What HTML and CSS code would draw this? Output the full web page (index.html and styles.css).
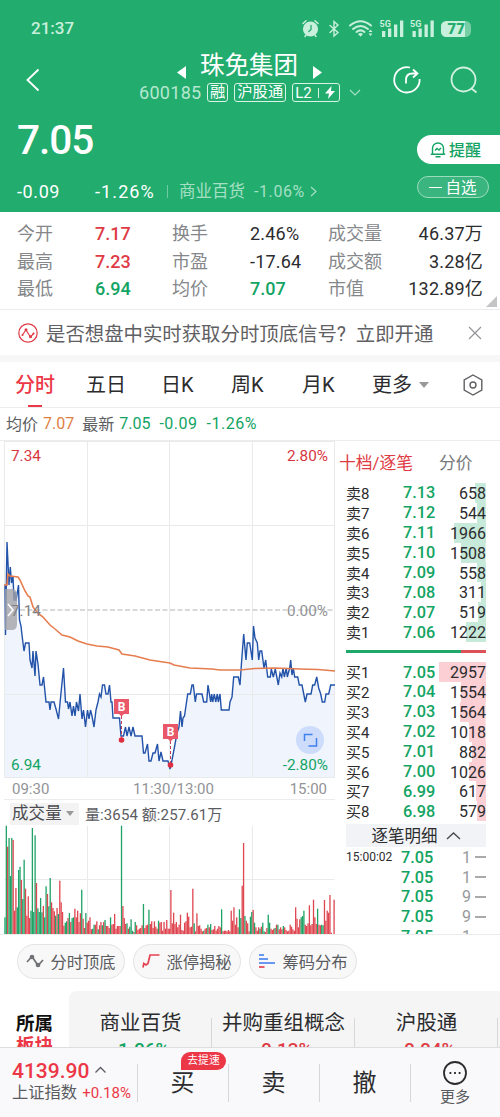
FILE: index.html
```
<!DOCTYPE html>
<html lang="zh-CN">
<head>
  <meta charset="UTF-8" />
  <meta name="viewport" content="width=device-width, initial-scale=1.0" />
  <title>珠免集团 600185</title>
  <link rel="stylesheet" href="styles.css">
</head>
<body>
<div class="app">

  <header class="top">
    <div class="status">
      <span class="clock">21:37</span>
      <svg class="status-icons" viewBox="300 16 174 24" width="174" height="24">
        <g fill="none" stroke="#c9f0dc" stroke-width="1.5" stroke-linecap="round">
          <circle cx="310.500" cy="29" r="6.800" fill="#c9f0dc"/>
          <path d="M303 23.500l3-2.800M318 23.500l-3-2.800M306 35l-1 1.500M315 35l1 1.500"/>
          <path d="M311 25.500v4l-2.200 2" stroke="#22ac6e" stroke-width="1.300"/>
          <path d="M330 25.500l8 7-4 3.500V21.500l4 3.500-8 7.500" stroke-width="1.400"/>
          <path d="M350 25.500q10.500-8.500 21 0M353 29q7.500-6 15 0M356.500 32q4-3.200 8 0" stroke-width="2"/>
        </g>
        <g fill="#c9f0dc">
          <path d="M358 34q2.500-2 5 0l-2.500 2.800zM368.500 32l2-2.500 2 2.500zM368.500 33.500h4l-2 2.500z"/>
          <path d="M382 31h3.300v6H382zM388 28.500h3.300V37H388zM394 24.500h3.300V37H394zM400 20.500h3.300V37H400z"/>
          <path d="M412.500 31h3.300v6h-3.300zM418.500 28.500h3.300V37h-3.300zM424.500 24.500h3.300V37h-3.300zM430.500 20.500h3.300V37h-3.300z"/>
          <rect x="441" y="21" width="30" height="16" rx="5.500" opacity=".5"/>
          <path d="M446.500 21H465v16h-18.500a5.500 5.500 0 0 1-5.500-5.500v-5a5.500 5.500 0 0 1 5.500-5.500z"/>
          <text class="net" x="379.500" y="27">5G</text>
          <text class="net" x="410" y="27">5G</text>
        </g>
        <text class="battery" x="447.500" y="34.300">77</text>
      </svg>
    </div>

    <div class="title-bar">
      <svg class="back" width="14" height="24" viewBox="0 0 14 24"><path d="M12.500 1.500L1.500 12l11 10.500"/></svg>
      <div class="title">
        <div class="name-row">
          <svg width="9" height="13" viewBox="0 0 9 13"><path d="M9 0v13L0 6.500z"/></svg>
          <h1>珠免集团</h1>
          <svg width="9" height="13" viewBox="0 0 9 13"><path d="M0 0v13l9-6.500z"/></svg>
        </div>
        <div class="code-row">
          <span class="code">600185</span>
          <span class="tag">融</span>
          <span class="tag">沪股通</span>
          <span class="tag l2">L2<i></i><svg width="10" height="13" viewBox="0 0 10 13"><path d="M6.500 0L0 7.500h4L3 13l7-8H6z"/></svg></span>
          <svg class="down" width="12" height="7" viewBox="0 0 12 7"><path d="M1 1l5 5 5-5"/></svg>
        </div>
      </div>
      <div class="tools">
        <svg width="28" height="28" viewBox="0 0 28 28"><path d="M17 1.500A12.700 12.700 0 1 0 26.600 13M13 17.500v-3.500q0-6.500 6.500-6.500h4.500M20 3.500l4.500 4-4.500 4"/></svg>
        <svg width="28" height="28" viewBox="0 0 28 28" class="search"><circle cx="13.500" cy="13.500" r="12"/><path d="M21.500 22.500l5 4"/></svg>
      </div>
    </div>

    <div class="price-block">
      <div class="price">7.05</div>
      <div class="change">
        <span class="diff">-0.09</span>
        <span class="pct">-1.26%</span>
        <span class="sector">商业百货</span>
        <span class="sector-pct">-1.06%</span>
        <svg width="7" height="11" viewBox="0 0 7 11"><path d="M1 1l5 4.500L1 10"/></svg>
      </div>
      <div class="remind">
        <svg width="16" height="17" viewBox="0 0 16 17"><path d="M2.500 13V7.500a5.500 5.500 0 0 1 11 0V13M.8 13.300h14.400M5.500 15.800h5M5 9.500l2-2 2 1.500 2-2"/></svg><span>提醒</span>
      </div>
      <div class="unpick"><i></i><span>自选</span></div>
    </div>
  </header>

  <section class="stats">
    <span>今开</span><b class="red">7.17</b><span>换手</span><b>2.46%</b><span>成交量</span><b class="r">46.37万</b>
    <span>最高</span><b class="red">7.23</b><span>市盈</span><b>-17.64</b><span>成交额</span><b class="r">3.28亿</b>
    <span>最低</span><b class="green">6.94</b><span>均价</span><b class="green">7.07</b><span>市值</span><b class="r">132.89亿</b>
  </section>

  <section class="notice">
    <svg width="20" height="20" viewBox="0 0 20 20"><circle cx="10" cy="10" r="9.200"/><path d="M4 12.500L8 7l4.500 7 3.500-4"/><g class="dots"><circle cx="8" cy="6.800" r="1.500"/><circle cx="12.500" cy="13.800" r="1.500"/><circle cx="4.500" cy="12" r="1"/><circle cx="15.500" cy="10.500" r="1"/></g></svg>
    <p>是否想盘中实时获取分时顶底信号? <span>立即开通</span></p>
    <svg class="close" width="14" height="14" viewBox="0 0 14 14"><path d="M1 1l12 12M13 1L1 13"/></svg>
  </section>

  <nav class="tabs">
    <span class="active">分时</span>
    <span>五日</span>
    <span>日K</span>
    <span>周K</span>
    <span>月K</span>
    <span class="more">更多</span>
    <svg width="22" height="22" viewBox="0 0 22 22"><path d="M11 1l8.800 5v10L11 21l-8.800-5V6z"/><circle cx="11" cy="11" r="3"/></svg>
  </nav>

  <div class="summary">
    <span>均价</span><b class="orange">7.07</b>
    <span class="latest">最新</span><b class="green">7.05</b><b class="green">-0.09</b><b class="green">-1.26%</b>
  </div>

  <main class="market">
    <div class="charts">
      <svg class="trend" viewBox="0 441 338 338" width="338" height="338">
        <path id="area" fill="#eff4fd"/>
        <path class="grid" d="M4.500 441.500h330M4.500 525.500h330M4.500 694.500h330M4.500 777.500h330M4.500 441v337M87.500 441v337M169.500 441v337M252.500 441v337M334.500 441v337"/>
        <path class="zero" d="M20 610h315"/>
        <polyline id="line" class="line"/>
        <polyline class="avg" points="4,585 7,585 8,574 10,576 18,577 20,580 25,591 28,596 30,597 33,607 36,611 39,614 43,617 50,625 55,629 62,635 70,637 78,641 87,644 97,646 108,647 119,650 122,654 135,656 150,660 163,662 170,663 174,665 190,668 212,669 220,670 240,670 255,668.500 275,668 300,669 318,669.500 335,671"/>
        <path d="M5 589h7q5 0 5 6v29q0 6-5 6H5z" fill="#a2a4a8" opacity=".8"/>
        <path d="M8 604l5 6-5 6" fill="none" stroke="#fff" stroke-width="1.500"/>
        <g class="mark">
          <path class="stem" d="M121.500 716v24M170.500 741v23"/>
          <path d="M114 699h15v15h-5l-2.500 2.500L119 714h-5zM163 724h15v15h-5l-2.500 2.500L168 739h-5z"/>
          <circle cx="121.500" cy="740" r="2.800"/><circle cx="170.500" cy="765" r="2.800"/>
          <text x="121.500" y="711">B</text><text x="170.500" y="736">B</text>
        </g>
        <circle cx="310" cy="740" r="14" fill="#ccdcfa"/>
        <path d="M304.500 741v-6.500h8M316.500 738v8h-8" fill="none" stroke="#3f7ff0" stroke-width="1.500"/>
        <g class="axis">
          <text x="11" y="461" fill="#d8363f">7.34</text>
          <text x="328" y="461" fill="#d8363f" text-anchor="end">2.80%</text>
          <text x="11" y="616" fill="#7f8083">7.14</text>
          <text x="328" y="616" fill="#929396" text-anchor="end">0.00%</text>
          <text x="11" y="770" fill="#13a463">6.94</text>
          <text x="328" y="770" fill="#13a463" text-anchor="end">-2.80%</text>
        </g>
      </svg>
      <div class="times"><span>09:30</span><span class="noon">11:30/13:00</span><span>15:00</span></div>
      <div class="vol-head"><span class="pick">成交量</span><span>量:3654 额:257.61万</span></div>
      <svg class="volume" viewBox="0 826 338 109" width="338" height="109">
        <path class="grid" d="M4.500 879.500h330M87.500 826v108M169.500 826v108M252.500 826v108"/>
        <g id="bars"></g>
      </svg>
    </div>

    <aside class="book">
      <div class="book-tabs"><span class="red">十档/逐笔</span><span>分价</span></div>
      <div id="asks"></div>
      <div class="ratio"></div>
      <div id="bids"></div>
      <div class="detail-head"><span>逐笔明细</span><svg width="15" height="8" viewBox="0 0 15 8"><path d="M1 7l6.500-6L14 7"/></svg></div>
      <div class="ticks" id="ticks"></div>
    </aside>
  </main>

  <section class="chips">
    <span><svg width="18" height="14" viewBox="0 0 18 14" class="g"><path d="M1 8l5-5.500 6 9L17 6"/><circle cx="6" cy="3" r="1.500"/><circle cx="12" cy="11" r="1.500"/></svg>分时顶底</span>
    <span><svg width="18" height="14" viewBox="0 0 18 14" class="rd"><path d="M1 13.500l.8-4L4 11l2-1.500L8 1h9.500"/></svg>涨停揭秘</span>
    <span><svg width="18" height="14" viewBox="0 0 18 14" class="bl"><path d="M1 1h5M1 5h9M1 9h16"/><path d="M1 13h5.500" stroke="#e34350"/></svg>筹码分布</span>
  </section>

  <section class="boards">
    <div class="boards-title">所属<em>板块</em></div>
    <div class="boards-list">
      <div>商业百货<b class="green">-1.06%</b></div>
      <div>并购重组概念<b class="red">-0.13%</b></div>
      <div>沪股通<b class="red">-0.04%</b></div>
    </div>
  </section>

  <footer class="bottom">
    <div class="index">
      <div class="index-value">4139.90<svg width="11" height="7" viewBox="0 0 11 7"><path d="M.5 6.500l5-5 5 5"/></svg></div>
      <div class="index-name">上证指数<b>+0.18%</b></div>
    </div>
    <div class="action">买<span class="bubble">去提速</span></div>
    <div class="action">卖</div>
    <div class="action">撤</div>
    <div class="menu">
      <svg width="24" height="24" viewBox="0 0 24 24"><circle cx="12" cy="12" r="11"/><path d="M6.500 12h1.800M11.100 12h1.800M15.700 12h1.800"/></svg>
      更多
    </div>
  </footer>
</div>
<script src="app.js"></script>
</body>
</html>
```
FILE: styles.css
```
:root {
  --green-bg: #22ac6e;
  --green: #13a463;
  --red: #df3b45;
  --text: #2c2c2e;
  --gray: #85878a;
  --line: #ececee;
}
* { box-sizing: border-box; }
body {
  margin: 0;
  font-family: Roboto, "Noto Sans CJK SC", sans-serif;
  background: #fff;
  color: var(--text);
}
b, h1, em { font-weight: 400; font-style: normal; }
svg { display: block; flex: none; overflow: visible; }
.app {
  width: 500px;
  height: 1117px;
  overflow: hidden;
  display: flex;
  flex-direction: column;
}
.app > * { flex: none; }
.red { color: var(--red); }
.green { color: var(--green); }
.orange { color: #df8043; }

/* header */
.top {
  height: 212px;
  background: var(--green-bg);
  color: #fff;
}
.status {
  height: 52px;
  padding: 4px 26px 0 31px;
  display: flex;
  align-items: center;
  justify-content: space-between;
}
.status-icons .net { font-size: 9px; font-weight: 700; }
.status-icons .battery { font-size: 15px; font-weight: 900; fill: var(--green-bg); }
.clock {
  font-size: 17px;
  font-weight: 500;
  color: #c9f0dc;
}
.title-bar {
  height: 56px;
  padding: 0 22px 0 26px;
  display: flex;
  align-items: center;
}
.title-bar svg { fill: none; stroke: #fff; stroke-width: 1.8; }
.title {
  margin-left: 99px;
  margin-right: auto;
}
.name-row {
  height: 26px;
  padding-left: 38px;
  display: flex;
  align-items: center;
}
.name-row svg { fill: #fff; stroke: none; margin-top: 12px; }
.name-row h1 {
  font-size: 24.500px;
  line-height: 26px;
  margin: 0 15px 0 14px;
}
.code-row {
  height: 28px;
  padding-bottom: 1px;
  display: flex;
  align-items: center;
}
.code {
  width: 63px;
  font-size: 18px;
  letter-spacing: .3px;
  color: #b5e8ce;
  margin-right: 5px;
}
.tag {
  height: 19px;
  border: 1px solid #d9f4e6;
  border-radius: 3px;
  font-size: 15.300px;
  line-height: 16px;
  padding: 0 2px 1px;
  margin-right: 6px;
  display: flex;
  align-items: center;
}
.tag.l2 { width: 48px; margin-right: 9px; justify-content: space-between; font-size: 15px; padding: 0 4px 0 2px; }
.tag i { width: 1px; height: 10px; background: #d9f4e6; }
.tag svg { fill: #fff; stroke: none; }
.title-bar .down { stroke: #a5e0c4; stroke-width: 1.2; }
.tools { display: flex; gap: 29px; }
.title-bar .search { stroke: #d2f1e0; }
.price-block {
  height: 104px;
  padding-left: 17px;
  position: relative;
}
.price {
  font-size: 40.500px;
  font-weight: 500;
  line-height: 64px;
  letter-spacing: -1px;
}
.change {
  margin-top: 8px;
  height: 22px;
  display: flex;
  align-items: center;
  font-size: 18px;
  letter-spacing: .6px;
}
.diff { width: 78px; }
.pct { width: 72px; letter-spacing: 1.1px; }
.sector {
  border-left: 1px solid #6fcba1;
  padding-left: 11px;
  line-height: 13px;
  font-size: 16.500px;
  letter-spacing: 0;
  color: #a5e0c4;
  margin-right: 9px;
}
.sector-pct { font-size: 16px; color: #a5e0c4; margin-right: 5px; }
.change svg { fill: none; stroke: #a5e0c4; stroke-width: 1.2; }
.remind {
  position: absolute;
  right: 0;
  top: 27px;
  width: 83px;
  height: 29px;
  border-radius: 15px 0 0 15px;
  background: #fff;
  color: var(--green);
  font-size: 16px;
  font-weight: 500;
  display: flex;
  align-items: center;
  padding-left: 13px;
  gap: 3px;
}
.remind span, .unpick span, .detail-head span { margin-top: -2px; }
.remind svg { fill: none; stroke: var(--green); stroke-width: 1.4; }
.unpick {
  position: absolute;
  right: 11px;
  top: 68px;
  width: 72px;
  height: 22px;
  border: 1px solid #9cdcbd;
  border-radius: 11px;
  background: #3bb57f;
  font-size: 15.500px;
  display: flex;
  align-items: center;
  justify-content: center;
  gap: 3px;
}
.unpick i { width: 13px; height: 1px; background: #fff; }

/* quote numbers */
.stats {
  height: 98px;
  padding: 8px 17px 0;
  display: grid;
  grid-template-columns: 78px 77px 78px 78px 60px 1fr;
  grid-auto-rows: 27.700px;
  align-items: center;
  font-size: 18px;
  line-height: 26px;
  border-bottom: 1px solid var(--line);
  position: relative;
}
.stats span { color: var(--gray); }
.stats b { white-space: nowrap; letter-spacing: .2px; }
.stats .red, .stats .green { font-weight: 500; letter-spacing: 0; }
.stats .r { text-align: right; }
.stats::after {
  content: "";
  position: absolute;
  right: 3px;
  bottom: 2px;
  border-left: 11px solid transparent;
  border-bottom: 11px solid #c4c4c6;
}
.notice {
  height: 52px;
  border-bottom: 7px solid #f7f7f8;
  padding: 0 18px;
  display: flex;
  align-items: center;
}
.notice svg { fill: none; stroke: var(--red); stroke-width: 1.2; }
.notice .dots { fill: var(--red); stroke: none; }
.notice p {
  margin: -1px auto 0 8px;
  font-size: 19.400px;
  color: #5f6063;
}
.notice p span { margin-left: 5px; }
.notice .close { stroke: #929497; }
.tabs {
  height: 46px;
  border-bottom: 1px solid var(--line);
  padding: 0 16px 0 15px;
  display: grid;
  grid-template-columns: 71px 75px 70px 71px 70px 1fr auto;
  align-items: center;
  font-size: 20px;
}
.tabs span { line-height: 46px; }
.tabs .active { color: #ec3747; font-weight: 500; position: relative; }
.tabs .active::after {
  content: "";
  position: absolute;
  left: 13px;
  bottom: 1px;
  width: 14px;
  height: 2px;
  background: #ec3747;
}
.tabs .more { display: flex; align-items: center; }
.tabs .more::after, .pick::after {
  content: "";
  border: 5px solid transparent;
  border-top: 6px solid #97999b;
  border-bottom: 0;
  margin-left: 7px;
}
.tabs svg { fill: none; stroke: #5f6063; stroke-width: 1.4; }
.summary {
  height: 32px;
  padding: 0 0 2px 6px;
  display: flex;
  align-items: center;
  font-size: 16px;
  color: #5b5c5f;
}
.summary b { margin-left: 5px; margin-right: 4px; }
.summary b + b { letter-spacing: .5px; }
.summary .latest { margin-left: 4px; }

/* charts */
.market {
  height: 495px;
  border-top: 1px solid var(--line);
  border-bottom: 1px solid var(--line);
  display: flex;
}
.charts { width: 346px; }
.grid { fill: none; stroke: #e9eaec; stroke-width: 1; }
.zero { fill: none; stroke: #b2b3b5; stroke-dasharray: 5 2.500; }
.line { fill: none; stroke: #2353a9; stroke-width: 1.4; }
.avg { fill: none; stroke: #e67d4f; stroke-width: 1.6; }
.axis { font-size: 15.300px; }
.mark { fill: #e95868; }
.mark circle { fill: #df2d42; }
.mark .stem { fill: none; stroke: #c43d55; stroke-dasharray: 3 2; }
.mark text { fill: #fff; font-size: 12px; font-weight: 700; text-anchor: middle; }
.times {
  width: 331px;
  height: 21px;
  margin-left: 4px;
  padding: 0 8px;
  display: flex;
  align-items: center;
  justify-content: space-between;
  font-size: 15px;
  color: #929396;
  border-bottom: 1px solid var(--line);
}
.times .noon { margin-left: 8px; }
.vol-head {
  height: 26px;
  padding: 1px 0 0 10px;
  display: flex;
  align-items: center;
  gap: 6px;
  font-size: 15px;
  color: #5b5c5f;
  letter-spacing: .1px;
}
.pick {
  width: 69px;
  height: 22px;
  background: #f3f3f4;
  padding-left: 2px;
  font-size: 16.500px;
  line-height: 22px;
  display: flex;
  align-items: center;
  color: #4a4b4e;
}
.pick::after { margin-left: 4px; border-width: 4px; border-top-width: 5px; border-bottom-width: 0; }

/* order book */
.book { width: 140px; }
.book-tabs {
  height: 42px;
  margin-left: -7px;
  display: flex;
  align-items: center;
  gap: 26px;
  font-size: 16.800px;
  color: #77797c;
}
.row {
  height: 19.900px;
  display: flex;
  align-items: center;
  justify-content: space-between;
  font-size: 16px;
}
.row span { width: 57px; font-size: 15px; margin-top: -1px; }
.row .p { font-size: 16.300px; font-weight: 500; width: 36px; color: var(--green); }
.row .v {
  flex: 1;
  height: 100%;
  line-height: 21px;
  text-align: right;
  background: no-repeat right / var(--w) 100%;
}
#asks .v { background-image: linear-gradient(#c6e9d9, #c6e9d9); }
#bids .v { background-image: linear-gradient(#fbcfd3, #fbcfd3); }
.ratio {
  height: 3px;
  margin: 8px 0 9px;
  background: linear-gradient(90deg, #1fa86a 82%, #dc5058 82%);
}
.detail-head {
  height: 23px;
  margin-top: 3px;
  background: #f2f3f7;
  display: flex;
  align-items: center;
  justify-content: center;
  gap: 8px;
  font-size: 16.500px;
}
.detail-head svg { fill: none; stroke: #4a4b4e; stroke-width: 1.4; }
.ticks { height: 87px; overflow: hidden; }
.ticks .row span { font-size: 12px; width: 55px; }
.ticks .row .v { color: #97999b; display: flex; align-items: center; justify-content: flex-end; gap: 4px; }
.ticks .row .v::after { content: ""; width: 11px; height: 2px; background: #a8aaac; }

/* tools under the chart */
.chips {
  height: 56px;
  padding: 9px 17px;
  display: flex;
  gap: 8px;
}
.chips span {
  width: 108px;
  height: 35px;
  border: 1px solid #e2e3e5;
  border-radius: 18px;
  background: #f8f8f9;
  display: flex;
  align-items: center;
  justify-content: center;
  gap: 6px;
  padding-bottom: 2px;
  font-size: 16.300px;
  color: #5b5c5f;
}
.chips svg { fill: none; stroke-width: 1.7; }
.chips .g { stroke: #717376; }
.chips .g circle { fill: #717376; }
.chips .rd { stroke: #e34350; }
.chips .bl { stroke: #3a78ef; }

.boards {
  height: 56px;
  display: flex;
  overflow: hidden;
}
.boards-title {
  width: 69px;
  padding: 22px 0 0 16px;
  font-size: 18.500px;
  line-height: 22px;
  font-weight: 700;
  color: #111;
}
.boards-title em { display: block; font-weight: 700; color: #ec3747; }
.boards-list {
  width: 431px;
  background: #f5f5f6;
  border-radius: 8px 0 0 0;
  padding-top: 19px;
  display: flex;
  font-size: 20.500px;
  line-height: 26px;
  text-align: center;
}
.boards-list div {
  width: 143px;
  height: 60px;
  background: linear-gradient(#d6d7d9, #d6d7d9) no-repeat right 8px / 1px 100%;
}
.boards-list b { display: block; font-size: 19px; line-height: 28px; font-weight: 500; }

.bottom {
  height: 70px;
  background: #f9f9fb;
  border-top: 1px solid #dddee0;
  display: flex;
}
.index {
  width: 137px;
  padding: 11px 0 0 12px;
  color: #ec3747;
}
.index-value {
  display: flex;
  gap: 6px;
  font-size: 21px;
  line-height: 25px;
  font-weight: 500;
}
.index-value svg { margin-top: 7px; fill: none; stroke: #5b5c5f; stroke-width: 1.3; }
.index-name {
  margin-top: -1px;
  font-size: 16.300px;
  line-height: 20px;
  color: #5b5c5f;
  white-space: nowrap;
}
.index-name b { color: #ec3747; font-size: 15px; margin-left: 5px; }
.action {
  width: 91px;
  padding-top: 18px;
  font-size: 24px;
  line-height: 34px;
  text-align: center;
  position: relative;
  background: linear-gradient(#d6d7d9, #d6d7d9) no-repeat left 16px / 1px 38px;
}
.bubble {
  position: absolute;
  left: 44px;
  top: 4px;
  width: 45px;
  height: 18px;
  border-radius: 9px 9px 9px 0;
  background: #ec3747;
  color: #fff;
  font-size: 10.800px;
  line-height: 17px;
}
.menu {
  flex: 1;
  padding-top: 13px;
  display: flex;
  flex-direction: column;
  align-items: center;
  font-size: 15px;
  line-height: 24px;
  color: #5b5c5f;
  background: linear-gradient(#d6d7d9, #d6d7d9) no-repeat left 16px / 1px 38px;
}
.menu svg { fill: none; stroke: #2c2c2e; stroke-width: 1.8; }
```
FILE: app.js
```
// 分时价格线
const price = `5,585 5.5,635 7,542 9,585 10.3,567 11.5,583 13,576 14,601 15,592 16,601 18.5,585 19.5,620 21,626 22,635
24,651 25.5,643 29,643 30,660 32,668 33,651 35,676 36,651 38,664 40,685 42,685 43.5,677 46,702 49,702 50,710 51,702
54,702 56,709 58.5,719 60.5,698 63.5,668 65.5,702 67.5,702 68.5,709 70,702 72,716 73.5,706 75,716 76.5,702 78.5,711
80,694 82,719 83.5,710 85.5,727 87.5,710 89,719 90.5,710 92,716 94,727 96,710 98,702 99.5,694 101,697 102.5,685
104.5,685 106,694 108,694 109.5,685 111,702 112,702 113,718 119.5,718 121,736 123.5,736 125.5,727 127,736 129,727
131,736 133,727 135,736 142,736 143.5,753 145,753 147.5,744 149,761 151,761 153,753 155,753 157.5,744 159,761
161,752 163,761 168,761 170,769 172,760 174.5,747 177,733 179,727 180.5,711 182,727 183,718 184.5,716 187.7,694
190.3,694 192,685 193.3,685 195.3,702 196.5,694 202,694 203.7,702 206.7,702 208,685 210.7,702 211.7,694 212.7,702
214.3,694 215.7,702 217.3,694 218.3,702 220,694 221.3,710 229,710 230,702 232,697 233.7,677 238.3,677 240,685
241.7,660 243.7,634 246,660 247.3,643 249.7,643 252.3,660 253.5,626 255,638 257.3,643 258.7,660 260,651 261.7,651
264,668 265.7,660 267.7,677 270.3,677 271.3,669 273.3,677 275.3,669 278.3,685 280,673 281.7,677 283,668 284.3,677
286.3,668 287.3,677 289.7,668 290.7,660 292,675 293.3,668 294.7,677 297.7,677 299.3,685 302,685 305.3,702 307,694
311,694 312.7,685 314.7,685 316.7,677 318.7,688 320.7,694 322.3,702 324.7,702 326,694 328.7,694 330.7,685 335,685`;
document.getElementById("line").setAttribute("points", price);
document.getElementById("area").setAttribute("d", `M4.5,777 L${price.replace(/\s+/g, " L")} L335,777z`);

// 成交量柱: g 跌 r 涨
const volume = `g50 g325 r262 g288 g174 g288 r282 r70 r138 g80 g192 g202 r162 g105 g223 r136 r55 r113 r48 g70 g318 g66
g296 r153 g77 g66 g108 g65 r84 g50 g143 r120 g83 g168 r95 r78 r68 g55 r78 g60 r160 r95 r66 r25 g34 g38 r48 g63 r36
g48 g50 r76 r50 r70 r36 r62 g133 r46 r18 g63 r34 r40 r50 r14 g16 g28 r28 r38 g14 r26 r36 g26 r36 g42 r24 r24 r18 g50
r28 r30 r60 r16 r24 r24 r24 g325 r84 r48 r30 g32 r16 g22 g44 g10 r6 g36 r26 r12 r16 r18 r26 g90 r18 r26 r28 g73 r30
r38 r18 r38 r22 r16 g40 r34 r36 r10 r36 r16 r42 r16 r16 r132 r32 r64 r30 r36 r20 r28 r58 r12 r10 r34 r38 r64 r52 r20
r22 r136 g32 r8 r62 r24 r26 r16 r8 g10 r16 r18 g28 r20 g30 r12 r14 r24 r10 r16 r24 r20 g74 r8 r10 r10 r8 r12 r8 r70
r40 r80 r28 r50 r20 g74 g48 r145 r273 g54 r40 r32 r8 g52 g66 r72 g34 r20 r10 r20 g16 r22 g34 g8 r6 r18 g58 g34 r16
r12 r16 g18 r28 g28 r14 r20 r14 g24 r20 r12 r8 r10 r28 r22 r14 r10 r80 r46 r20 r44 g50 g54 g70 r28 r24 r32 r86 r26
r30 r103 r50 r30 g76 r28 r26 g28 g26 r102 r40 r70 r64 r117 r4 r0 r103`.split(/\s+/);
const step = 330.5 / volume.length;
document.getElementById("bars").innerHTML = volume.map((v, i) => {
  const h = v.slice(1) / 3;
  const color = v[0] === "g" ? "#1fa266" : "#df4650";
  return `<rect x="${(4.3 + i * step).toFixed(2)}" y="${(934 - h).toFixed(1)}" width="1.3" height="${h.toFixed(1)}" fill="${color}"/>`;
}).join("");

// 十档
function rows(id, label, list) {
  document.getElementById(id).innerHTML = list.map(([n, p, v]) =>
    `<div class="row"><span>${label}${n}</span><b class="p">${p}</b><b class="v" style="--w:${(v * 0.0164).toFixed(1)}px">${v}</b></div>`
  ).join("");
}
rows("asks", "卖", [[8, "7.13", 658], [7, "7.12", 544], [6, "7.11", 1966], [5, "7.10", 1508],
  [4, "7.09", 558], [3, "7.08", 311], [2, "7.07", 519], [1, "7.06", 1222]]);
rows("bids", "买", [[1, "7.05", 2957], [2, "7.04", 1554], [3, "7.03", 1564], [4, "7.02", 1018],
  [5, "7.01", 882], [6, "7.00", 1026], [7, "6.99", 617], [8, "6.98", 579]]);

document.getElementById("ticks").innerHTML = [1, 1, 9, 9, 1].map((v, i) =>
  `<div class="row"><span>${i ? "" : "15:00:02"}</span><b class="p">7.05</b><b class="v">${v}</b></div>`
).join("");
```
